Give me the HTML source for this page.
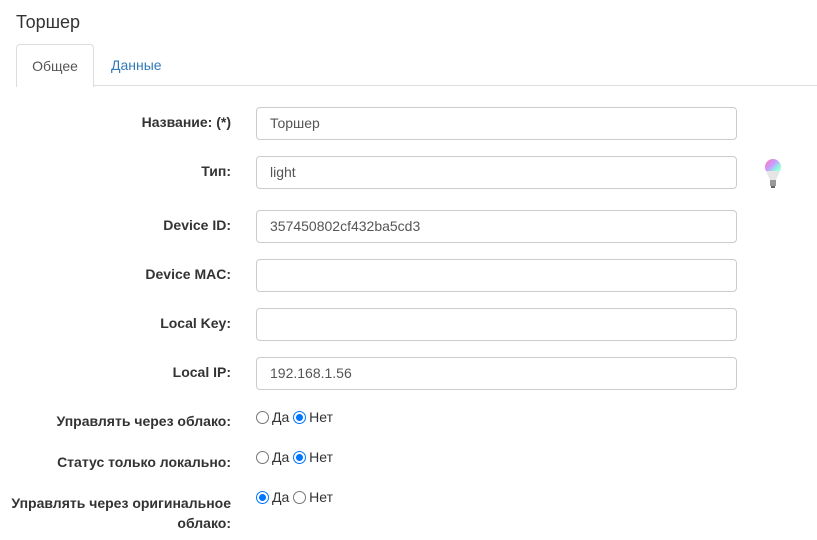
<!DOCTYPE html>
<html><head><meta charset="utf-8"><style>
body{margin:0;width:817px;height:540px;background:#fff;font-family:"Liberation Sans",Arial,sans-serif;font-size:14px;color:#333;position:relative;overflow:hidden}
.a{position:absolute}
.title{left:16px;top:12px;font-size:18px;color:#333}
.tabline{left:16px;right:0;top:85px;border-top:1px solid #ddd}
.tab{left:16px;top:44px;width:76px;height:42px;border:1px solid #ddd;border-bottom:none;border-radius:4px 4px 0 0;background:#fff;text-align:center;line-height:42px;color:#555}
.tab2{left:111px;top:44px;line-height:42px;color:#337ab7}
.lbl{right:586px;font-weight:bold;text-align:right;color:#333}
.in{left:256px;width:466px;height:31px;border:1px solid #ccc;border-radius:4px;padding-left:13px;line-height:31px;color:#555}
.r{left:256px;color:#333;display:flex;align-items:center;font-size:14px}
.rb{width:13px;height:13px;border:1px solid #767676;border-radius:50%;display:inline-block;margin-right:3px;position:relative;box-sizing:border-box}
.rb.on{border:1.5px solid #0075ff;background:radial-gradient(circle,#0075ff 0 3.3px,#fff 3.6px)}
</style></head><body>
<div class="a title">Торшер</div>
<div class="a tabline"></div>
<div class="a tab">Общее</div>
<div class="a tab2">Данные</div>

<div class="a lbl" style="top:114px">Название: (*)</div>
<div class="a in" style="top:107px">Торшер</div>
<div class="a lbl" style="top:163px">Тип:</div>
<div class="a in" style="top:156px">light</div>
<svg class="a" style="left:763px;top:158px" width="20" height="33" viewBox="0 0 20 33">
<defs><linearGradient id="g" x1="0" y1="0" x2="1" y2="1"><stop offset="0" stop-color="#f7a"/><stop offset=".4" stop-color="#c9f"/><stop offset=".7" stop-color="#8fd"/><stop offset="1" stop-color="#eee"/></linearGradient></defs>
<circle cx="10" cy="9" r="8" fill="url(#g)"/><path d="M3 13 L7 22 H13 L17 13Z" fill="#e6e6e6"/><rect x="7" y="22" width="6" height="6" fill="#999"/><rect x="8" y="28" width="4" height="2" fill="#666"/></svg>
<div class="a lbl" style="top:217px">Device ID:</div>
<div class="a in" style="top:210px">357450802cf432ba5cd3</div>
<div class="a lbl" style="top:266px">Device MAC:</div>
<div class="a in" style="top:259px"></div>
<div class="a lbl" style="top:315px">Local Key:</div>
<div class="a in" style="top:308px"></div>
<div class="a lbl" style="top:364px">Local IP:</div>
<div class="a in" style="top:357px">192.168.1.56</div>

<div class="a lbl" style="top:413px">Управлять через облако:</div>
<div class="a r" style="top:409px"><span class="rb"></span>Да&nbsp;<span class="rb on"></span>Нет</div>
<div class="a lbl" style="top:454px">Статус только локально:</div>
<div class="a r" style="top:449px"><span class="rb"></span>Да&nbsp;<span class="rb on"></span>Нет</div>
<div class="a lbl" style="top:493px;line-height:20px">Управлять через оригинальное<br>облако:</div>
<div class="a r" style="top:489px"><span class="rb on"></span>Да&nbsp;<span class="rb"></span>Нет</div>
</body></html>
